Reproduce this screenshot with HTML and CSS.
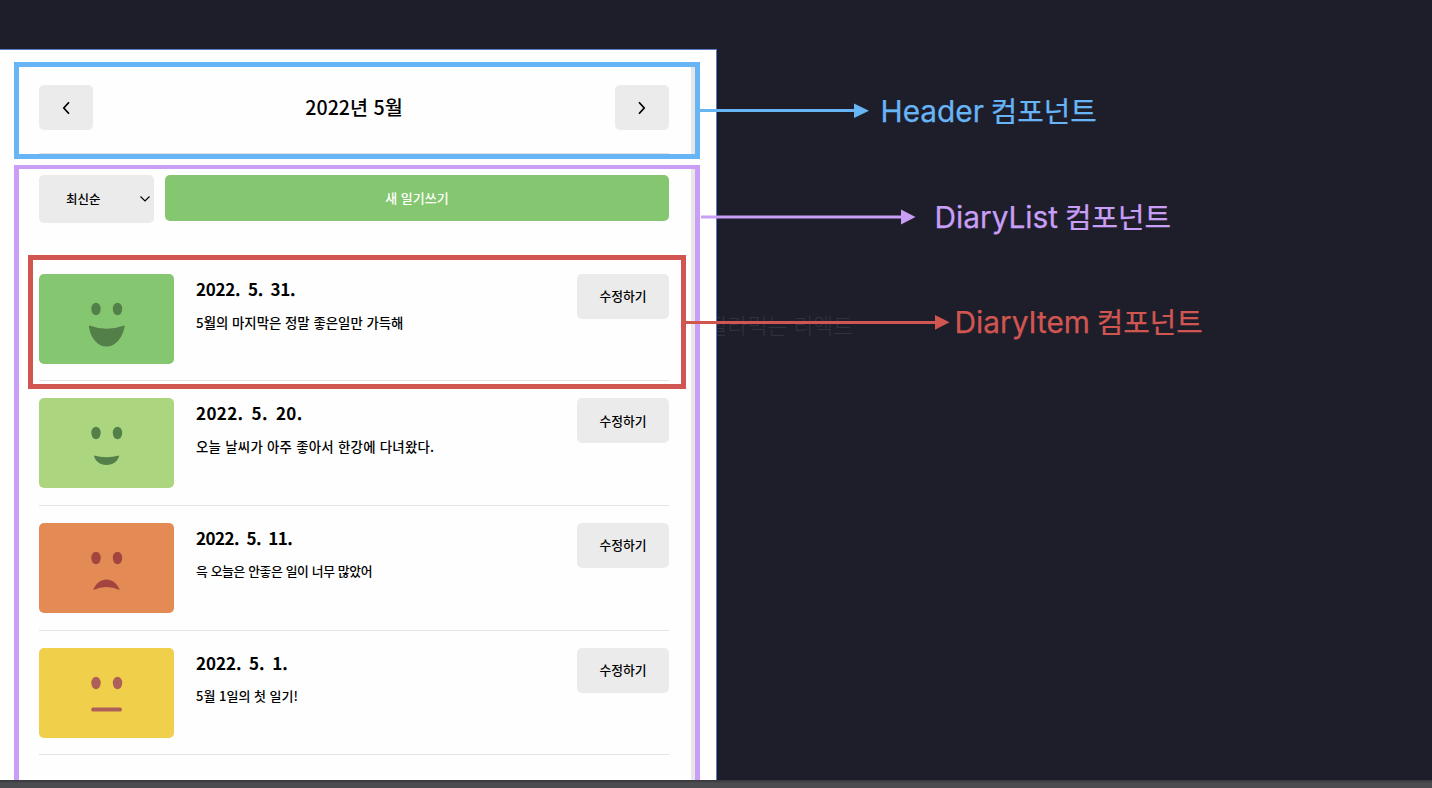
FILE: index.html
```html
<!DOCTYPE html>
<html lang="ko">
<head>
<meta charset="utf-8">
<title>Diary components</title>
<link rel="stylesheet" href="styles.css">
</head>
<body>
<div class="stage">
  <main class="sheet">
    <div class="app">
      <header class="header">
        <button class="btn nav"><svg width="10" height="14" viewBox="0 0 10 14"><path d="M8 1.200L2.800 7l5.200 5.800"/></svg></button>
        <h1 class="title">2022년 5월</h1>
        <button class="btn nav"><svg width="10" height="14" viewBox="0 0 10 14"><path d="M2 1.200L7.200 7l-5.200 5.800"/></svg></button>
      </header>
      <div class="controls">
        <div class="btn select"><span>최신순</span><svg width="12" height="8" viewBox="0 0 12 8"><path d="M1.500 1.500L6 6l4.500-4.500"/></svg></div>
        <button class="btn create">새 일기쓰기</button>
      </div>
      <section class="list">
        <article class="item">
          <div class="face great"><svg width="60" height="60" viewBox="0 0 60 60"><ellipse cx="20" cy="20" rx="4.700" ry="6.200"/><ellipse cx="41.500" cy="20" rx="4.700" ry="6.200"/><path d="M13.500 36.500Q30.500 43 48 36.500Q49 36.500 48.500 38.500C46 50 39 57.500 30.500 57.500S15 50 13 38.500Q12.500 36.500 13.500 36.500Z"/></svg></div>
          <div class="info"><h2 class="d1">2022. 5. 31.</h2><p class="t1">5월의 마지막은 정말 좋은일만 가득해</p></div>
          <button class="btn edit">수정하기</button>
        </article>
        <article class="item">
          <div class="face good"><svg width="60" height="60" viewBox="0 0 60 60"><ellipse cx="20" cy="20" rx="4.700" ry="6.200"/><ellipse cx="41.500" cy="20" rx="4.700" ry="6.200"/><path d="M17.800 42.500Q30.500 46 43.200 42.500C42.200 48 37.200 52 30.500 52S19.200 48 17.800 42.500Z"/></svg></div>
          <div class="info"><h2 class="d2">2022. 5. 20.</h2><p class="t2">오늘 날씨가 아주 좋아서 한강에 다녀왔다.</p></div>
          <button class="btn edit">수정하기</button>
        </article>
        <article class="item">
          <div class="face bad"><svg width="60" height="60" viewBox="0 0 60 60"><ellipse cx="20" cy="20" rx="4.700" ry="6.200"/><ellipse cx="41.500" cy="20" rx="4.700" ry="6.200"/><path d="M17.200 52C20 45 25 41.500 30.500 41.500S41 45 43.800 52Q30.500 46 17.200 52Z"/></svg></div>
          <div class="info"><h2 class="d3">2022. 5. 11.</h2><p class="t3">윽 오늘은 안좋은 일이 너무 많았어</p></div>
          <button class="btn edit">수정하기</button>
        </article>
        <article class="item">
          <div class="face soso"><svg width="60" height="60" viewBox="0 0 60 60"><ellipse cx="20" cy="20" rx="4.700" ry="6.200"/><ellipse cx="41.500" cy="20" rx="4.700" ry="6.200"/><rect x="15.300" y="44.500" width="30.500" height="4" rx="1.500"/></svg></div>
          <div class="info"><h2 class="d4">2022. 5. 1.</h2><p class="t4">5월 1일의 첫 일기!</p></div>
          <button class="btn edit">수정하기</button>
        </article>
      </section>
    </div>
    <div class="edge"></div>
  </main>
  <div class="watermark">로 잘라먹는 리액트</div>
  <div class="frame frame-header"></div>
  <div class="frame frame-list"></div>
  <div class="frame frame-item"></div>
  <svg class="arrows" width="1432" height="788" viewBox="0 0 1432 788">
    <g fill="#68b5f6"><rect x="700" y="109" width="156" height="3"/><path d="M854 103.500L869 110.700L854 118Z"/></g>
    <g fill="#c99ef6"><rect x="701" y="215.500" width="202" height="3"/><path d="M901 209.500L915.500 217L901 224.500Z"/></g>
    <g fill="#d15651"><rect x="686" y="321" width="251" height="3"/><path d="M935 315L949.500 322.300L935 329.700Z"/></g>
  </svg>
  <div class="label label-header">Header <span>컴포넌트</span></div>
  <div class="label label-list">DiaryList <span>컴포넌트</span></div>
  <div class="label label-item">DiaryItem <span>컴포넌트</span></div>
  <footer class="bar"></footer>
</div>
</body>
</html>
```
FILE: styles.css
```css
* { box-sizing: border-box; }
body { margin: 0; background: #1e1e2a; font-family: "Noto Sans CJK KR", sans-serif; color: #000; }
.stage { position: relative; width: 1432px; height: 788px; overflow: hidden; padding-top: 49px; display: flex; flex-direction: column; }
.sheet { width: 717px; height: 731px; flex: none; display: flex; overflow: hidden; background: #fff; border: solid #5b7bc6; border-width: 1px 1px 0 0; }
.app { width: 691px; flex: none; padding: 0 22px 0 39px; background: #fefefe; }
.edge { width: 5px; margin-top: 17px; background: linear-gradient(#e7e7e7 91px, #fff 91px 99px, #e7e7e7 99px); }
.header { height: 104px; padding-top: 35px; display: flex; justify-content: space-between; align-items: flex-start; border-bottom: 1px solid #e4e4e4; }
.btn { border: 0; padding: 0; border-radius: 5px; background: #ebebeb; color: #000; font: 500 12.8px/1 "Noto Sans CJK KR", sans-serif; display: flex; align-items: center; justify-content: center; }
.nav { width: 54px; height: 45px; }
svg { display: block; }
.nav svg, .select svg { fill: none; stroke: #000; stroke-width: 1.7; }
.select svg { stroke-width: 1.2; }
.title { margin: 0; font-size: 19.6px; line-height: 44px; font-weight: 500; }
.controls { display: flex; gap: 11px; padding-top: 21px; height: 103px; align-items: flex-start; }
.select { width: 115px; height: 48px; padding: 0 3px 0 27px; justify-content: space-between; font-size: 12.5px; }
.create { flex: 1; height: 46px; padding-bottom: 2px; background: #85c770; color: #fff; font-size: 13px; }
.item { height: 124.6px; padding-top: 17px; display: flex; align-items: flex-start; border-bottom: 1px solid #e3e3e3; }
.list { margin-top: -.2px; }
.face { width: 135px; height: 90px; border-radius: 5px; padding: 15px 0 0 37px; }
.great { background: #85c770; fill: #537f49; }
.good { background: #abd67f; fill: #537f49; }
.bad { background: #e48a55; fill: #a3443e; }
.soso { background: #f0cf4b; fill: #ad6059; }
.info { flex: 1; padding-left: 22px; white-space: nowrap; }
.info h2 { margin: 0; font-size: 17px; line-height: 30px; font-weight: 700; word-spacing: 3px; }
.d1 { letter-spacing: -.25px; }
.d2 { letter-spacing: .35px; }
.d3 { letter-spacing: -.5px; }
.d4 { letter-spacing: -.05px; }
.info p { margin: 5px 0 0; font-size: 13.4px; line-height: 26px; font-weight: 500; }
.t2 { letter-spacing: .27px; }
.info .t3 { font-size: 12.8px; letter-spacing: -.35px; }
.info .t4 { font-size: 13px; }
.edit { width: 92px; height: 45px; }
.bar { height: 8px; background: linear-gradient(#36373a, #4b4c4f 40%); }

/* annotations laid over the app */
.frame { position: absolute; border: 5px solid; }
.frame-header { left: 14px; top: 62px; width: 686px; height: 97px; color: #68b5f6; }
.frame-list { left: 14px; top: 165px; width: 686px; height: 615px; color: #c99ef6; border-bottom: 0; border-top-width: 4px; }
.frame-item { left: 28px; top: 255px; width: 658px; height: 134px; color: #d15651; }
.arrows { position: absolute; left: 0; top: 0; }
.watermark { position: absolute; left: 682px; top: 311px; font-size: 21.6px; line-height: 28px; font-weight: 300; color: rgba(110, 110, 125, .25); white-space: nowrap; clip-path: inset(0 0 0 34px); }
.label { position: absolute; font-family: Inter, "Noto Sans CJK KR", sans-serif; font-size: 29.8px; line-height: 40px; white-space: nowrap; -webkit-text-stroke: .25px currentColor; }
.label span { font-family: "Noto Sans CJK KR", sans-serif; font-size: 28.8px; line-height: 1; margin-left: -1.5px; }
.label-header { left: 880.5px; top: 91px; color: #68b5f6; }
.label-list { left: 934.5px; top: 197px; color: #c99ef6; }
.label-item { left: 954.5px; top: 302px; color: #d15651; }
```
